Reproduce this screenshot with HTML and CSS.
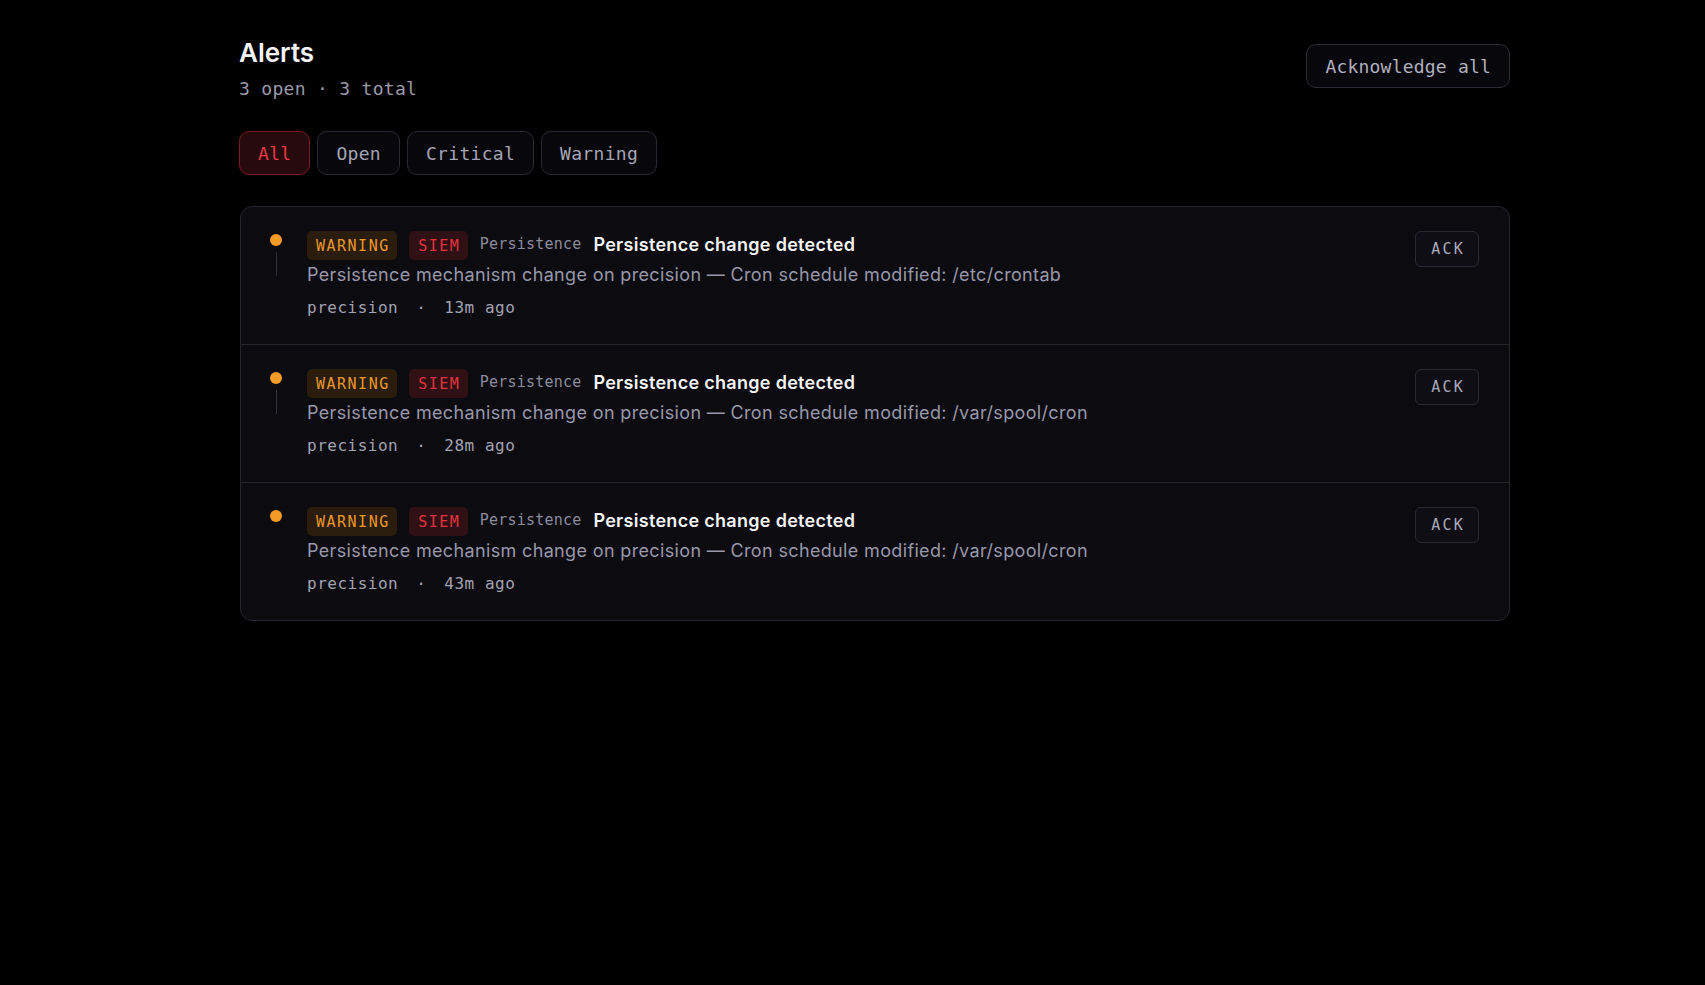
FILE: index.html
```html
<!DOCTYPE html>
<html lang="en">
<head>
    <meta charset="UTF-8">
    <meta name="viewport" content="width=device-width, initial-scale=1.0">
    <title>Alerts</title>
    <link rel="stylesheet" href="styles.css">
</head>
<body>
    <div class="page">
        <header class="page-header">
            <div>
                <h1>Alerts</h1>
                <p class="summary">3 open · 3 total</p>
            </div>
            <button class="btn-outline">Acknowledge all</button>
        </header>

        <div class="filters">
            <button class="filter active">All</button>
            <button class="filter">Open</button>
            <button class="filter">Critical</button>
            <button class="filter">Warning</button>
        </div>

        <div class="alert-list">
            <div class="alert">
                <div class="marker">
                    <span class="dot"></span>
                    <span class="stem"></span>
                </div>
                <div class="alert-body">
                    <div class="alert-head">
                        <span class="badge warning">WARNING</span>
                        <span class="badge siem">SIEM</span>
                        <span class="category">Persistence</span>
                        <span class="title">Persistence change detected</span>
                    </div>
                    <p class="desc">Persistence mechanism change on precision — Cron schedule modified: /etc/crontab</p>
                    <div class="meta">
                        <span>precision</span>
                        <span>·</span>
                        <span>13m ago</span>
                    </div>
                </div>
                <button class="ack">ACK</button>
            </div>

            <div class="alert">
                <div class="marker">
                    <span class="dot"></span>
                    <span class="stem"></span>
                </div>
                <div class="alert-body">
                    <div class="alert-head">
                        <span class="badge warning">WARNING</span>
                        <span class="badge siem">SIEM</span>
                        <span class="category">Persistence</span>
                        <span class="title">Persistence change detected</span>
                    </div>
                    <p class="desc">Persistence mechanism change on precision — Cron schedule modified: /var/spool/cron</p>
                    <div class="meta">
                        <span>precision</span>
                        <span>·</span>
                        <span>28m ago</span>
                    </div>
                </div>
                <button class="ack">ACK</button>
            </div>

            <div class="alert">
                <div class="marker">
                    <span class="dot"></span>
                </div>
                <div class="alert-body">
                    <div class="alert-head">
                        <span class="badge warning">WARNING</span>
                        <span class="badge siem">SIEM</span>
                        <span class="category">Persistence</span>
                        <span class="title">Persistence change detected</span>
                    </div>
                    <p class="desc">Persistence mechanism change on precision — Cron schedule modified: /var/spool/cron</p>
                    <div class="meta">
                        <span>precision</span>
                        <span>·</span>
                        <span>43m ago</span>
                    </div>
                </div>
                <button class="ack">ACK</button>
            </div>
        </div>
    </div>
</body>
</html>
```

FILE: styles.css
```css
* {
    margin: 0;
    padding: 0;
    box-sizing: border-box;
}

body {
    background: #000;
    color: #f2f2f5;
    font-family: 'Inter', 'Noto Sans', sans-serif;
    min-height: 100vh;
}

.page {
    padding: 36px 195px 40px 239px;
}

.page-header {
    display: flex;
    justify-content: space-between;
    align-items: flex-start;
}

h1 {
    font-size: 26px;
    line-height: 34px;
    font-weight: 600;
    color: #f4f4f7;
}

.summary {
    margin-top: 6px;
    font-family: 'DejaVu Sans Mono', 'Liberation Mono', monospace;
    font-size: 18px;
    line-height: 26px;
    letter-spacing: 0.3px;
    color: #9a9aaa;
}

button {
    font-family: 'DejaVu Sans Mono', 'Liberation Mono', monospace;
    cursor: pointer;
}

.btn-outline {
    height: 44px;
    margin-top: 8px;
    padding: 0 18px;
    background: #08080c;
    border: 1px solid #2c2c36;
    border-radius: 10px;
    font-size: 18px;
    letter-spacing: 0.2px;
    color: #b0b0bf;
}

.filters {
    display: flex;
    gap: 7px;
    margin-top: 29px;
}

.filter {
    height: 44px;
    padding: 0 18px;
    background: #08080c;
    border: 1px solid #2a2a33;
    border-radius: 10px;
    font-size: 18px;
    letter-spacing: 0.3px;
    color: #a5a5b5;
}

.filter.active {
    background: #260a0d;
    border-color: #7c1a21;
    color: #ef3a44;
}

.alert-list {
    margin-top: 31px;
    margin-left: 1px;
    background: #0b0b10;
    border: 1px solid #25252e;
    border-radius: 12px;
    overflow: hidden;
}

.alert {
    display: grid;
    grid-template-columns: 12px 1fr auto;
    column-gap: 25px;
    padding: 24px 30px 24px 29px;
}

.alert + .alert {
    border-top: 1px solid #25252e;
}

.marker {
    display: flex;
    flex-direction: column;
    align-items: center;
}

.dot {
    width: 12px;
    height: 12px;
    margin-top: 3px;
    border-radius: 50%;
    background: #f29b26;
}

.stem {
    width: 1px;
    height: 24px;
    margin-top: 6px;
    background: #30303a;
}

.alert-head {
    display: flex;
    align-items: center;
    gap: 12px;
    height: 29px;
}

.badge {
    display: inline-flex;
    align-items: center;
    height: 29px;
    padding: 0 7.5px 0 9px;
    border-radius: 5px;
    font-family: 'DejaVu Sans Mono', 'Liberation Mono', monospace;
    font-size: 15px;
    letter-spacing: 1.5px;
}

.badge.warning {
    background: #2a1d0d;
    color: #ea982b;
}

.badge.siem {
    background: #2f1015;
    color: #e8333d;
}

.category {
    font-family: 'DejaVu Sans Mono', 'Liberation Mono', monospace;
    font-size: 15px;
    letter-spacing: 0.2px;
    color: #8c8c9c;
    margin-top: -4px;
}

.title {
    margin-top: -3px;
    font-size: 18px;
    font-weight: 600;
    letter-spacing: 0.3px;
    color: #f4f4f7;
}

.desc {
    margin-top: 3px;
    font-size: 18px;
    line-height: 24px;
    letter-spacing: 0.35px;
    color: #9898a9;
}

.meta {
    display: flex;
    gap: 18px;
    margin-top: 9px;
    font-family: 'DejaVu Sans Mono', 'Liberation Mono', monospace;
    font-size: 16px;
    line-height: 24px;
    letter-spacing: 0.5px;
    color: #a2a2b0;
}

.ack {
    height: 36px;
    padding: 0 13px 0 15px;
    background: #0e0e14;
    border: 1px solid #2a2a33;
    border-radius: 6px;
    font-size: 15px;
    letter-spacing: 2.2px;
    color: #a8a8b8;
}
```
